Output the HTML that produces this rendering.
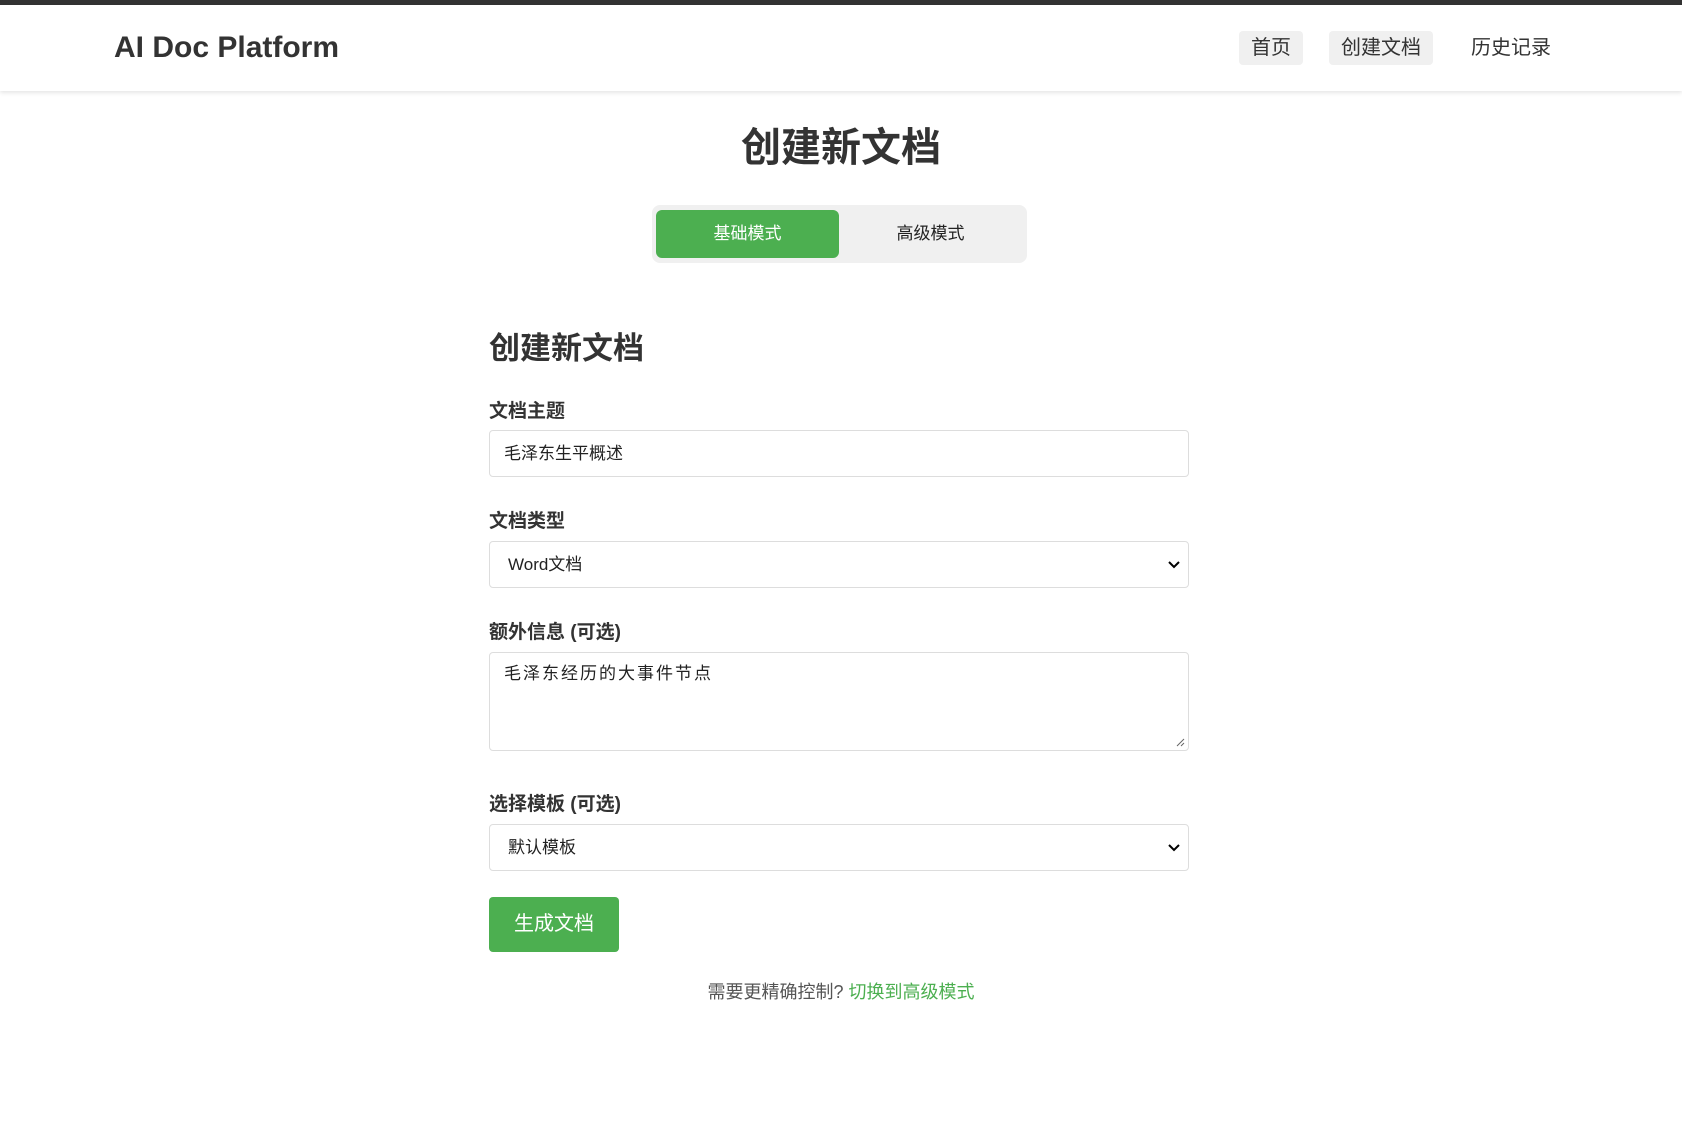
<!DOCTYPE html>
<html><head><meta charset="utf-8"><style>
*{box-sizing:border-box;margin:0;padding:0}
body{width:1682px;height:1143px;background:#fff;font-family:"Liberation Sans","Noto Sans CJK SC",sans-serif;color:#333;position:relative;overflow:hidden}
.top{position:absolute;left:0;top:0;width:1682px;height:5px;background:#333}
.hdr{position:absolute;left:0;top:5px;width:1682px;height:86px;background:#fff;box-shadow:0 2px 4px rgba(0,0,0,.1)}
.logo{position:absolute;left:114px;top:26px;font-size:30px;font-weight:bold;color:#333}
.nav{position:absolute;top:26px;height:34px;line-height:34px;font-size:20px;padding:0 12px;border-radius:4px;color:#333}
.a{position:absolute}
h1{position:absolute;left:0;width:1682px;text-align:center;top:123px;font-size:40px;line-height:50px;color:#333}
.tog{position:absolute;left:652px;top:205px;width:375px;height:58px;background:#f0f0f0;border-radius:8px}
.tb{position:absolute;top:5px;height:48px;width:183px;line-height:48px;text-align:center;font-size:17px;border-radius:6px}
.lbl{position:absolute;left:489px;font-size:19px;font-weight:bold;color:#333}
.box{position:absolute;left:489px;width:700px;border:1px solid #ddd;border-radius:4px;font-size:17px;color:#222;padding-left:14px}
.chev{position:absolute;right:8px;top:50%;margin-top:-5px}
</style></head><body>
<div class="top"></div>
<div class="hdr">
<div class="logo">AI Doc Platform</div>
<div class="nav" style="left:1239px;background:#f0f0f0">首页</div>
<div class="nav" style="left:1329px;background:#f0f0f0">创建文档</div>
<div class="nav" style="left:1459px">历史记录</div>
</div>
<h1>创建新文档</h1>
<div class="tog">
<div class="tb" style="left:4px;background:#4caf50;color:#fff">基础模式</div>
<div class="tb" style="left:187px;color:#222">高级模式</div>
</div>
<div class="a" style="left:489px;top:329px;font-size:31px;font-weight:bold;line-height:40px">创建新文档</div>
<div class="lbl" style="top:396px">文档主题</div>
<div class="box" style="top:430px;height:47px;line-height:45px">毛泽东生平概述</div>
<div class="lbl" style="top:506px">文档类型</div>
<div class="box" style="top:541px;height:47px;line-height:45px;padding-left:18px">Word文档<svg class="chev" width="12" height="10" viewBox="0 0 12 10"><path d="M1 2l5 5 5-5" fill="none" stroke="#000" stroke-width="2"/></svg></div>
<div class="lbl" style="top:617px">额外信息 (可选)</div>
<div class="box" style="top:652px;height:99px;padding-top:10px;letter-spacing:2px;line-height:22px">毛泽东经历的大事件节点<svg style="position:absolute;right:3px;bottom:3px" width="9" height="9"><path d="M1 8L8 1M5 8L8 5" stroke="#666"/></svg></div>
<div class="lbl" style="top:789px">选择模板 (可选)</div>
<div class="box" style="top:824px;height:47px;line-height:45px;padding-left:18px">默认模板<svg class="chev" width="12" height="10" viewBox="0 0 12 10"><path d="M1 2l5 5 5-5" fill="none" stroke="#000" stroke-width="2"/></svg></div>
<div class="a" style="left:489px;top:897px;width:130px;height:55px;background:#4caf50;color:#fff;border-radius:4px;font-size:20px;line-height:55px;text-align:center">生成文档</div>
<div class="a" style="left:0;width:1682px;text-align:center;top:978px;font-size:18px;color:#555">需要更精确控制? <span style="color:#4caf50">切换到高级模式</span></div>
</body></html>
